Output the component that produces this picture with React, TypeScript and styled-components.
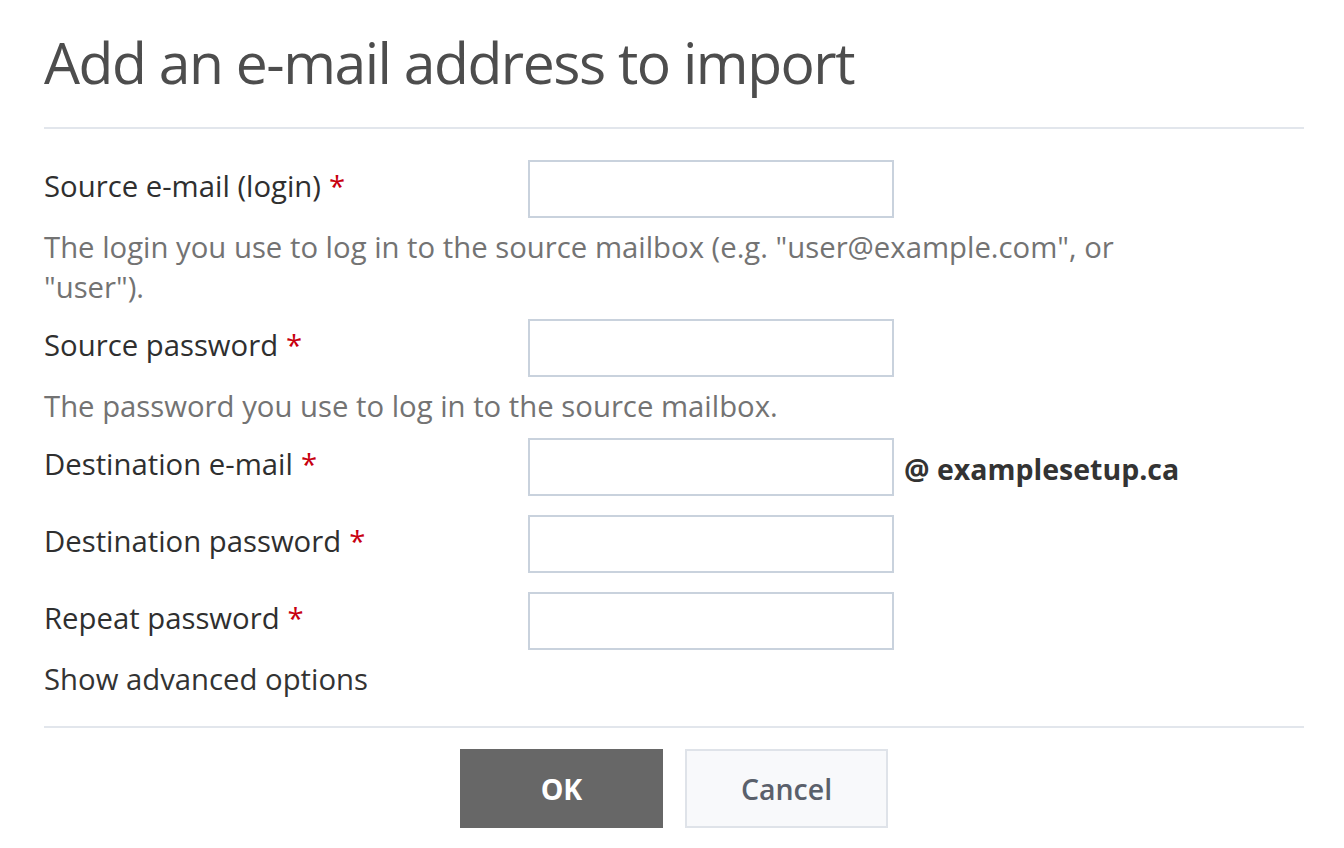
import React from "react";
import styled, { createGlobalStyle } from "styled-components";

const Global = createGlobalStyle`
  html, body { margin: 0; padding: 0; background: #ffffff; }
  body { font-family: "Open Sans", "Noto Sans", sans-serif; }
  * { box-sizing: border-box; }
`;

const Page = styled.div`
  padding: 22px 40px 0 44px;
  font-family: "Open Sans", "Noto Sans", sans-serif;
`;

const Title = styled.h1`
  margin: 0;
  font-size: 57px;
  line-height: 80px;
  font-weight: 400;
  letter-spacing: -1.47px;
  color: #4d4d4d;
`;

const Divider = styled.hr<{ $top: number; $bottom: number }>`
  border: none;
  height: 2px;
  background: #e2e6ec;
  margin: ${(p) => p.$top}px 0 ${(p) => p.$bottom}px;
`;

const Field = styled.div<{ $gap: number }>`
  margin-bottom: ${(p) => p.$gap}px;
`;

const Row = styled.div`
  display: flex;
  align-items: center;
  height: 58px;
`;

const Label = styled.label`
  width: 484px;
  flex: none;
  font-size: 29.3px;
  line-height: 40px;
  color: #2f2f2f;
  margin-top: -6px;
`;

const Required = styled.span`
  color: #c8000f;
  margin-left: 8px;
`;

const Input = styled.input`
  width: 366px;
  height: 58px;
  border: 2px solid #c9d2dd;
  background: #fff;
  padding: 0 12px;
  font-family: inherit;
  font-size: 28px;
  outline: none;
`;

const Suffix = styled.span`
  margin-left: 10px;
  font-size: 28.5px;
  line-height: 40px;
  font-weight: 700;
  color: #333333;
  margin-top: 4px;
`;

const Help = styled.div`
  margin-top: 9px;
  width: 1090px;
  font-size: 29.3px;
  line-height: 40px;
  color: #737373;
`;

const Advanced = styled.div`
  font-size: 29.3px;
  line-height: 40px;
  color: #333333;
  margin-top: -10px;
  cursor: pointer;
`;

const Buttons = styled.div`
  display: flex;
  justify-content: center;
  gap: 22px;
`;

const Button = styled.button<{ $primary?: boolean }>`
  width: 203px;
  height: 79px;
  font-family: inherit;
  font-size: 28.5px;
  font-weight: ${(p) => (p.$primary ? 700 : 600)};
  color: ${(p) => (p.$primary ? "#ffffff" : "#5a606b")};
  background: ${(p) => (p.$primary ? "#676767" : "#f8f9fb")};
  border: ${(p) => (p.$primary ? "none" : "2px solid #dfe3e9")};
  cursor: pointer;
`;

type FieldDef = {
  label: string;
  help?: string;
  suffix?: string;
  type?: string;
};

const fields: FieldDef[] = [
  {
    label: "Source e-mail (login)",
    help: 'The login you use to log in to the source mailbox (e.g. "user@example.com", or "user").',
  },
  {
    label: "Source password",
    type: "password",
    help: "The password you use to log in to the source mailbox.",
  },
  { label: "Destination e-mail", suffix: "@ examplesetup.ca" },
  { label: "Destination password", type: "password" },
  { label: "Repeat password", type: "password" },
];

export default function App() {
  return (
    <Page>
      <Global />
      <Title>Add an e-mail address to import</Title>
      <Divider $top={25} $bottom={31} />
      {fields.map((f, i) => (
        <Field key={i} $gap={f.help ? 12 : 19}>
          <Row>
            <Label>
              {f.label}
              <Required>*</Required>
            </Label>
            <Input type={f.type ?? "text"} />
            {f.suffix && <Suffix>{f.suffix}</Suffix>}
          </Row>
          {f.help && <Help>{f.help}</Help>}
        </Field>
      ))}
      <Advanced>Show advanced options</Advanced>
      <Divider $top={27} $bottom={21} />
      <Buttons>
        <Button $primary>OK</Button>
        <Button>Cancel</Button>
      </Buttons>
    </Page>
  );
}
